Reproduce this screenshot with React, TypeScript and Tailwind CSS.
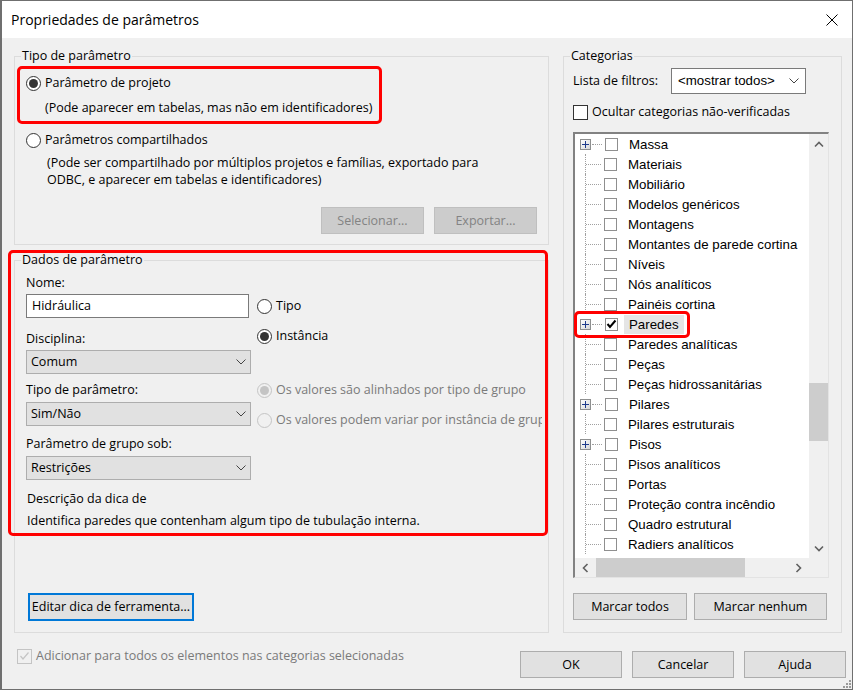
import React from 'react';

const categories: { name: string; plus?: boolean; checked?: boolean }[] = [
  { name: 'Massa', plus: true },
  { name: 'Materiais' },
  { name: 'Mobiliário' },
  { name: 'Modelos genéricos' },
  { name: 'Montagens' },
  { name: 'Montantes de parede cortina' },
  { name: 'Níveis' },
  { name: 'Nós analíticos' },
  { name: 'Painéis cortina' },
  { name: 'Paredes', plus: true, checked: true },
  { name: 'Paredes analíticas' },
  { name: 'Peças' },
  { name: 'Peças hidrossanitárias' },
  { name: 'Pilares', plus: true },
  { name: 'Pilares estruturais' },
  { name: 'Pisos', plus: true },
  { name: 'Pisos analíticos' },
  { name: 'Portas' },
  { name: 'Proteção contra incêndio' },
  { name: 'Quadro estrutural' },
  { name: 'Radiers analíticos' },
];

function ChevronDown({ className = '' }: { className?: string }) {
  return (
    <svg className={className} width="10" height="6" viewBox="0 0 10 6">
      <polyline points="0.5,0.5 5,5 9.5,0.5" fill="none" stroke="#444" strokeWidth="1" />
    </svg>
  );
}

function Arrow({ dir }: { dir: 'up' | 'down' | 'left' | 'right' }) {
  const pts = {
    up: '1,5.5 5,1.5 9,5.5',
    down: '1,1.5 5,5.5 9,1.5',
    left: '5.5,1 1.5,5 5.5,9',
    right: '1.5,1 5.5,5 1.5,9',
  }[dir];
  const vertical = dir === 'up' || dir === 'down';
  return (
    <svg width={vertical ? 10 : 7} height={vertical ? 7 : 10} viewBox={vertical ? '0 0 10 7' : '0 0 7 10'}>
      <polyline points={pts} fill="none" stroke="#606060" strokeWidth="1.6" />
    </svg>
  );
}

function Radio({ checked, disabled }: { checked?: boolean; disabled?: boolean }) {
  return (
    <span
      className={`w-[15px] h-[15px] rounded-full border flex items-center justify-center shrink-0 ${
        disabled ? 'border-[#c4c4c4] bg-[#f0f0f0]' : 'border-[#333333] bg-white'
      }`}
    >
      {checked && <span className={`w-[9px] h-[9px] rounded-full ${disabled ? 'bg-[#c4c4c4]' : 'bg-[#333333]'}`} />}
    </span>
  );
}

function RadioRow({ className = '', checked, disabled, children }: { className?: string; checked?: boolean; disabled?: boolean; children: React.ReactNode }) {
  return (
    <div className={`flex items-center h-[16px] ${className}`}>
      <Radio checked={checked} disabled={disabled} />
      <span className={`ml-[4px] leading-[16px] ${disabled ? 'text-[#7a7a7a]' : ''}`}>{children}</span>
    </div>
  );
}

function Combo({ value, className = '' }: { value: string; className?: string }) {
  return (
    <div className={`h-[24px] w-[225px] border border-[#adadad] bg-[#e1e1e1] flex items-center pl-[4px] pr-[4px] ${className}`}>
      <span>{value}</span>
      <ChevronDown className="ml-auto" />
    </div>
  );
}

function Btn({ children, className = '', disabled }: { children: React.ReactNode; className?: string; disabled?: boolean }) {
  return (
    <button
      className={`h-[27px] border flex items-center justify-center ${
        disabled ? 'bg-[#cccccc] border-[#bfbfbf] text-[#838383]' : 'bg-[#e1e1e1] border-[#adadad]'
      } ${className}`}
    >
      {children}
    </button>
  );
}

function TreeRow({ name, plus, checked }: { name: string; plus?: boolean; checked?: boolean }) {
  return (
    <div className="h-[20px] flex items-center shrink-0">
      {plus ? (
        <>
          <span className="ml-[5px] w-[11px] h-[11px] border border-[#8e8f8f] bg-gradient-to-br from-white to-[#d6d6d6] flex items-center justify-center">
            <svg width="7" height="7" viewBox="0 0 7 7">
              <path d="M0 3.5H7M3.5 0V7" stroke="#1f3b8c" strokeWidth="1" />
            </svg>
          </span>
          <span className="ml-[1px] w-[10px] border-t border-dotted border-[#a0a0a0]" />
        </>
      ) : (
        <>
          <span className="ml-[10px] h-full border-l border-dotted border-[#a0a0a0]" />
          <span className="w-[15px] border-t border-dotted border-[#a0a0a0]" />
        </>
      )}
      <span className="ml-[3px] w-[13px] h-[13px] border border-[#8f8f8f] bg-white flex items-center justify-center shrink-0">
        {checked && (
          <svg width="11" height="10" viewBox="0 0 11 10">
            <path d="M1.5 5L4 8L9.5 1.5" fill="none" stroke="#000" strokeWidth="2" />
          </svg>
        )}
      </span>
      <span className={`ml-[6px] px-[5px] h-[19px] leading-[19px] whitespace-nowrap ${checked ? 'bg-[#e5e5e5]' : ''}`}>{name}</span>
    </div>
  );
}

export default function App() {
  return (
    <div className="relative w-[854px] h-[693px] bg-white overflow-hidden">
      <div className="w-[853px] h-[690px] border border-l-2 border-[#6f6f6f] flex flex-col font-['Open_Sans',sans-serif] text-[12.5px] leading-[16px] text-black">
        {/* title bar */}
        <div className="h-[37px] bg-white flex items-center pl-[9px] pr-[14px] shrink-0">
          <span className="text-[14px] leading-[18px] mt-[1px]">Propriedades de parâmetros</span>
          <svg className="ml-auto mt-[1px]" width="12" height="12" viewBox="0 0 12 12">
            <path d="M0.5 0.5L11.5 11.5M11.5 0.5L0.5 11.5" stroke="#000" strokeWidth="1" />
          </svg>
        </div>

        <div className="flex-1 bg-[#f0f0f0] relative flex flex-col">
          <div className="flex pt-[11px]">
            {/* left column */}
            <div className="ml-[12px] w-[535px] flex flex-col">
              <fieldset className="border border-[#dcdcdc] h-[196px] flex flex-col">
                <legend className="ml-[6px] px-[1px] leading-[14px]">Tipo de parâmetro</legend>
                <RadioRow className="mt-[12px] ml-[11px]" checked>Parâmetro de projeto</RadioRow>
                <div className="mt-[9px] ml-[30px]">(Pode aparecer em tabelas, mas não em identificadores)</div>
                <RadioRow className="mt-[16px] ml-[11px]">Parâmetros compartilhados</RadioRow>
                <div className="mt-[6px] ml-[32px] leading-[17px]">
                  (Pode ser compartilhado por múltiplos projetos e famílias, exportado para
                  <br />
                  ODBC, e aparecer em tabelas e identificadores)
                </div>
                <div className="mt-[19px] mr-[11px] flex justify-end gap-[10px]">
                  <Btn disabled className="w-[103px]">Selecionar...</Btn>
                  <Btn disabled className="w-[103px]">Exportar...</Btn>
                </div>
              </fieldset>

              <fieldset className="mt-[8px] border border-[#dcdcdc] h-[380px] flex flex-col">
                <legend className="ml-[6px] px-[1px] leading-[14px]">Dados de parâmetro</legend>
                <div className="flex ml-[11px]">
                  <div className="w-[225px] flex flex-col">
                    <span className="mt-[8px]">Nome:</span>
                    <div className="mt-[3px] w-[223px] h-[24px] bg-white border border-[#7a7a7a] flex items-center pl-[5px]">Hidráulica</div>
                    <span className="mt-[13px]">Disciplina:</span>
                    <Combo className="mt-[3px]" value="Comum" />
                    <span className="mt-[8px]">Tipo de parâmetro:</span>
                    <Combo className="mt-[4px]" value="Sim/Não" />
                    <span className="mt-[10px]">Parâmetro de grupo sob:</span>
                    <Combo className="mt-[4px]" value="Restrições" />
                  </div>
                  <div className="ml-[6px] w-[285px] flex flex-col overflow-hidden whitespace-nowrap">
                    <RadioRow className="mt-[31px]">Tipo</RadioRow>
                    <RadioRow className="mt-[14px]" checked>Instância</RadioRow>
                    <RadioRow className="mt-[38px]" checked disabled>Os valores são alinhados por tipo de grupo</RadioRow>
                    <RadioRow className="mt-[14px]" disabled>Os valores podem variar por instância de grupo</RadioRow>
                  </div>
                </div>
                <span className="ml-[12px] mt-[11px]">Descrição da dica de</span>
                <span className="ml-[12px] mt-[6px]">Identifica paredes que contenham algum tipo de tubulação interna.</span>
                <button className="ml-[13px] mt-[64px] w-[166px] h-[28px] border-2 border-[#0078d7] bg-[#e1e1e1] flex items-center justify-center">
                  Editar dica de ferramenta...
                </button>
              </fieldset>
            </div>

            {/* right column */}
            <fieldset className="ml-[14px] w-[279px] h-[584px] border border-[#dcdcdc] flex flex-col">
              <legend className="ml-[6px] px-[1px] leading-[14px]">Categorias</legend>
              <div className="pl-[9px] flex flex-col">
                <div className="mt-[5px] flex items-center">
                  <span className="w-[98px]">Lista de filtros:</span>
                  <div className="w-[135px] h-[26px] bg-white border border-[#7a7a7a] flex items-center pl-[6px] pr-[6px]">
                    <span className="font-['Liberation_Sans',Arial,sans-serif] text-[13.3px]">&lt;mostrar todos&gt;</span>
                    <ChevronDown className="ml-auto" />
                  </div>
                </div>
                <div className="mt-[10px] flex items-center">
                  <span className="w-[15px] h-[15px] border border-[#333333] bg-white" />
                  <span className="ml-[4px]">Ocultar categorias não-verificadas</span>
                </div>

                <div className="mt-[12px] w-[256px] h-[446px] border-t-2 border-l-2 border-r border-b border-t-[#828282] border-l-[#828282] border-r-[#e3e3e3] border-b-[#e3e3e3] bg-white flex flex-col">
                  <div className="flex flex-1 min-h-0">
                    <div className="flex-1 overflow-hidden flex flex-col font-['Liberation_Sans',Arial,sans-serif] text-[13.3px]">
                      {categories.map((c) => (
                        <TreeRow key={c.name} {...c} />
                      ))}
                    </div>
                    <div className="w-[19px] bg-[#f0f0f0] flex flex-col">
                      <div className="h-[20px] flex items-center justify-center">
                        <Arrow dir="up" />
                      </div>
                      <div className="h-[229px]" />
                      <div className="h-[58px] bg-[#cdcdcd]" />
                      <div className="flex-1" />
                      <div className="h-[20px] flex items-center justify-center">
                        <Arrow dir="down" />
                      </div>
                    </div>
                  </div>
                  <div className="h-[19px] flex bg-[#f0f0f0]">
                    <div className="w-[20px] flex items-center justify-center">
                      <Arrow dir="left" />
                    </div>
                    <div className="ml-[1px] w-[149px] bg-[#cdcdcd]" />
                    <div className="flex-1" />
                    <div className="w-[22px] flex items-center justify-center">
                      <Arrow dir="right" />
                    </div>
                    <div className="w-[19px]" />
                  </div>
                </div>

                <div className="mt-[15px] flex gap-[7px]">
                  <Btn className="w-[114px]">Marcar todos</Btn>
                  <Btn className="w-[133px]">Marcar nenhum</Btn>
                </div>
              </div>
            </fieldset>
          </div>

          {/* bottom row */}
          <div className="flex items-start mt-[15px]">
            <div className="ml-[15px] flex items-center">
              <span className="w-[15px] h-[15px] border border-[#c4c4c4] flex items-center justify-center">
                <svg width="11" height="10" viewBox="0 0 11 10">
                  <path d="M1.5 5L4 8L9.5 1.5" fill="none" stroke="#c4c4c4" strokeWidth="1.2" />
                </svg>
              </span>
              <span className="ml-[4px] text-[#7a7a7a]">Adicionar para todos os elementos nas categorias selecionadas</span>
            </div>
            <div className="ml-auto mr-[6px] mt-[3px] flex gap-[10px]">
              <Btn className="w-[102px]">OK</Btn>
              <Btn className="w-[102px]">Cancelar</Btn>
              <Btn className="w-[102px]">Ajuda</Btn>
            </div>
          </div>

          {/* resize grip */}
          <svg className="absolute right-[1px] bottom-[1px]" width="9" height="9" viewBox="0 0 9 9" fill="#9a9a9a">
            <rect x="7" y="1" width="2" height="2" />
            <rect x="4" y="4" width="2" height="2" />
            <rect x="7" y="4" width="2" height="2" />
            <rect x="1" y="7" width="2" height="2" />
            <rect x="4" y="7" width="2" height="2" />
            <rect x="7" y="7" width="2" height="2" />
          </svg>
        </div>
      </div>

      {/* red annotation frames drawn over the dialog */}
      <div className="absolute left-[17px] top-[66px] w-[365px] h-[58px] border-[3px] border-[#ff0000] rounded-[5px]" />
      <div className="absolute left-[8px] top-[250px] w-[540px] h-[286px] border-[3px] border-[#ff0000] rounded-[5px]" />
      <div className="absolute left-[574px] top-[311px] w-[116px] h-[27px] border-[3px] border-[#ff0000] rounded-[5px]" />
    </div>
  );
}
